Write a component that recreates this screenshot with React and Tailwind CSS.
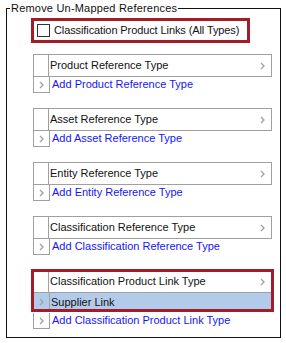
import React from 'react';

const Chevron = ({ className = '' }) => (
  <svg width="5" height="8" viewBox="0 0 5 8" className={className}>
    <polyline points="1,1 4,4 1,7" fill="none" stroke="#a0a0a0" strokeWidth="1.3" />
  </svg>
);

const groups = [
  { title: 'Product Reference Type', add: 'Add Product Reference Type' },
  { title: 'Asset Reference Type', add: 'Add Asset Reference Type' },
  { title: 'Entity Reference Type', add: 'Add Entity Reference Type' },
  { title: 'Classification Reference Type', add: 'Add Classification Reference Type' },
];

const Header = ({ title }) => (
  <div className="flex h-[23px] border border-[#a0a0a0] bg-white">
    <div className="w-[15px] border-r border-[#a0a0a0]" />
    <div className="flex-1 flex items-center justify-between pl-[1px] pr-[6px] text-[#111]">
      <span>{title}</span>
      <Chevron />
    </div>
  </div>
);

const AddRow = ({ text }) => (
  <div className="flex h-[16px]">
    <div className="w-[17px] border-l border-r border-b border-[#a0a0a0] flex items-center justify-center">
      <Chevron />
    </div>
    <span className="pl-[2px] text-[#1515f5] leading-[15px]">{text}</span>
  </div>
);

export default function App() {
  return (
    <div className="w-[286px] h-[343px] bg-white pt-[8px] pl-[6px] text-[11px] font-['Liberation_Sans',Arial,sans-serif]">
      <div className="relative w-[275px] h-[330px] border border-[#111]">
        {/* Legend */}
        <div className="absolute -top-[8px] left-[3px] bg-white px-[1px] text-[#111] leading-[14px] tracking-[0.2px]">
          Remove Un-Mapped References
        </div>

        <div className="pl-[24px] pt-[9px]">
          <div className="w-[219px] h-[25px] border-[3px] border-[#a31d29] flex items-center pl-[3px] gap-[4px] text-[#111]">
            <div className="w-[13px] h-[13px] border border-[#333] bg-white" />
            <span className="tracking-[-0.1px]">Classification Product Links (All Types)</span>
          </div>

          <div className="pl-[2px] pt-[11px] w-[241px]">
            {groups.map((g) => (
              <div key={g.title} className="mb-[15px]">
                <Header title={g.title} />
                <AddRow text={g.add} />
              </div>
            ))}

            <div className="relative">
              <Header title="Classification Product Link Type" />
              <div className="flex h-[19px] border-r border-b border-[#a0a0a0] bg-[#b3cbea]">
                <div className="w-[17px] border-l border-r border-[#a0a0a0] flex items-center justify-center">
                  <Chevron />
                </div>
                <span className="pl-[1px] leading-[18px] text-[#111]">Supplier Link</span>
              </div>
              <div className="absolute -left-[2px] -top-[1px] w-[243px] h-[43px] border-[3px] border-[#a31d29]" />
              <div className="mt-[1px]">
                <AddRow text="Add Classification Product Link Type" />
              </div>
            </div>
          </div>
        </div>
      </div>
    </div>
  );
}
